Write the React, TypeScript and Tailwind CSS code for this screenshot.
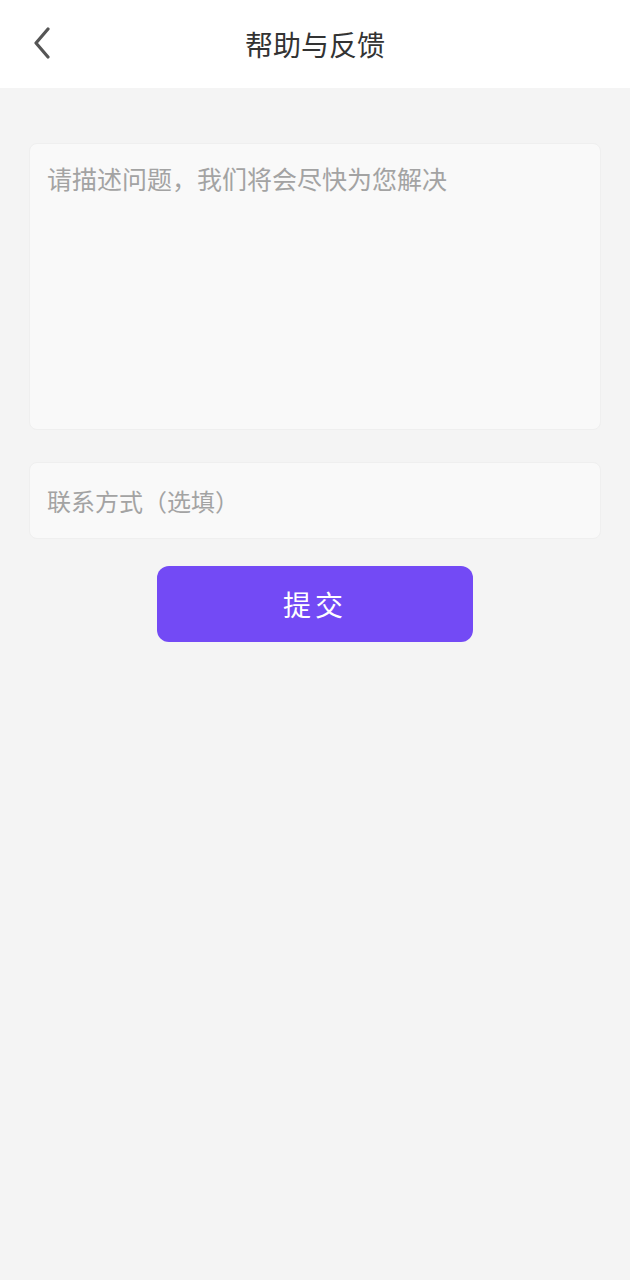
import type { FC } from 'react';

const BackIcon: FC = () => (
  <svg width="20" height="32" viewBox="0 0 20 32" fill="none">
    <path d="M16 2 L4 16 L16 30" stroke="#555" strokeWidth="3.2" strokeLinecap="round" strokeLinejoin="round" />
  </svg>
);

const App: FC = () => {
  return (
    <div
      className="min-h-[1280px] w-[630px] bg-[#f4f4f4]"
      style={{ fontFamily: '"Noto Sans CJK SC", "Noto Sans", sans-serif' }}
    >
      <div className="relative flex h-[88px] items-center justify-center bg-white">
        <button className="absolute left-[32px] top-[27px] flex items-center">
          <BackIcon />
        </button>
        <h1 className="text-[28px] text-[#333]">帮助与反馈</h1>
      </div>

      <div className="flex flex-col px-[29px] pt-[55px]">
        <textarea
          className="h-[287px] w-full resize-none rounded-[8px] border border-[#efefef] bg-[#f9f9f9] px-[17px] py-[16px] text-[25px] leading-[36px] text-[#333] outline-none placeholder:text-[#a3a3a3]"
          placeholder="请描述问题，我们将会尽快为您解决"
        />
        <input
          className="mt-[32px] h-[77px] w-full rounded-[8px] border border-[#efefef] bg-[#f9f9f9] px-[17px] text-[24px] text-[#333] outline-none placeholder:text-[#a3a3a3]"
          placeholder="联系方式（选填）"
        />
        <div className="flex justify-center pt-[27px]">
          <button className="flex h-[76px] w-[316px] items-center justify-center rounded-[12px] bg-[#734af5] text-[28px] tracking-[4px] text-white">
            提交
          </button>
        </div>
      </div>
    </div>
  );
};

export default App;
